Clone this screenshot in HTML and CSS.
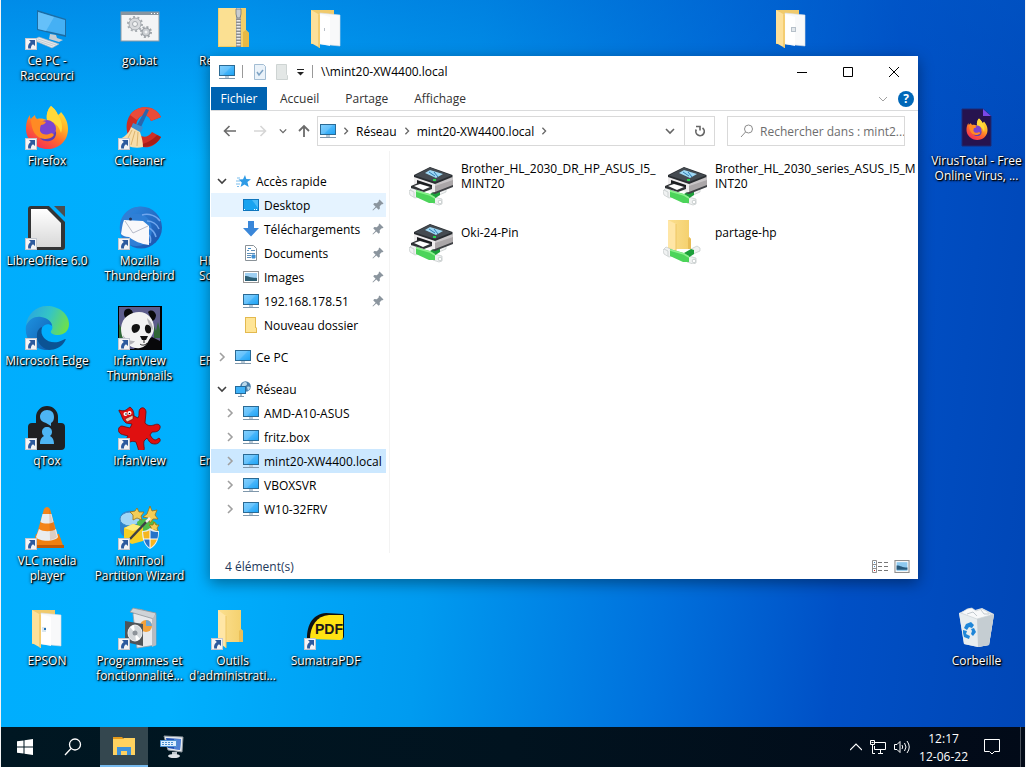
FILE: index.html
```html
<!DOCTYPE html>
<html lang="fr">
<head>
  <meta charset="UTF-8">
  <meta name="viewport" content="width=device-width, initial-scale=1.0">
  <title>Bureau</title>
  <link rel="stylesheet" href="styles.css">
</head>
<body>

  <!-- Shared icon shapes -->
  <svg class="sprites" width="0" height="0" aria-hidden="true">
    <defs>
      <linearGradient id="g-screen" x1="0" y1="0" x2="1" y2="1">
        <stop offset="0" stop-color="#6cc8ff"/><stop offset=".5" stop-color="#4ab7fb"/><stop offset="1" stop-color="#1fa4f5"/>
      </linearGradient>
      <linearGradient id="g-folder" x1="0" y1="0" x2="1" y2="0">
        <stop offset="0" stop-color="#fbdf90"/><stop offset="1" stop-color="#f4d06c"/>
      </linearGradient>
      <linearGradient id="g-fox" x1=".8" y1="0" x2=".2" y2="1">
        <stop offset="0" stop-color="#ffe83a"/><stop offset=".35" stop-color="#ffb025"/><stop offset=".6" stop-color="#ff6a2c"/><stop offset="1" stop-color="#f2265c"/>
      </linearGradient>
      <linearGradient id="g-edge1" x1="0" y1=".3" x2="1" y2=".6">
        <stop offset="0" stop-color="#2aa6e0"/><stop offset=".5" stop-color="#35c5c4"/><stop offset="1" stop-color="#6ee04b"/>
      </linearGradient>
      <linearGradient id="g-edge2" x1="0" y1="0" x2="1" y2="1">
        <stop offset="0" stop-color="#1e92e0"/><stop offset="1" stop-color="#0f5cae"/>
      </linearGradient>
      <linearGradient id="g-paper" x1="0" y1="0" x2="0" y2="1">
        <stop offset="0" stop-color="#ffffff"/><stop offset="1" stop-color="#d8d8d8"/>
      </linearGradient>
      <linearGradient id="g-tb" x1="0" y1="0" x2="1" y2="1">
        <stop offset="0" stop-color="#2f8fe6"/><stop offset="1" stop-color="#1b4fa8"/>
      </linearGradient>
    </defs>

    <symbol id="shortcut" viewBox="0 0 12 12">
      <rect width="12" height="12" fill="#f4f4f6"/>
      <rect x=".5" y=".5" width="11" height="11" fill="none" stroke="#c4c8d0"/>
      <path d="M4 2h6v6L8 6.200C6.500 7.200 5.800 8.500 6 10.500H3.200C2.600 7.500 3.600 5.500 5.800 4z" fill="#2d5a9e"/>
    </symbol>

    <symbol id="monitor" viewBox="0 0 16 16">
      <rect x="0" y="1" width="16" height="11" fill="#2b6a94"/>
      <rect x="1" y="2" width="14" height="9" fill="url(#g-screen)"/>
      <path d="M1 2h12L4 11H1z" fill="#fff" opacity=".15"/>
      <rect x="6" y="12" width="4" height="2" fill="#b9c9d6"/>
      <rect x="0" y="14" width="16" height="1" fill="#7f97ab"/>
    </symbol>

    <symbol id="right" viewBox="0 0 10 10">
      <path d="M3 1l4 4-4 4" fill="none" stroke="currentColor" stroke-width="1.600"/>
    </symbol>
    <symbol id="down" viewBox="0 0 10 10">
      <path d="M1 3l4 4 4-4" fill="none" stroke="currentColor" stroke-width="1.600"/>
    </symbol>

    <symbol id="pin" viewBox="0 0 12 12">
      <path d="M7.500.5l4 4-1 .8-.8-.1-2 2 .2 2.400-1.200 1.200L4.300 8.400 1 11.500l-.5-.5 3.100-3.300L1.200 5.300l1.200-1.200 2.400.2 2-2-.1-.8z" fill="#8b959e"/>
    </symbol>

    <symbol id="folder" viewBox="0 0 16 16">
      <path d="M2 0h11v10l1 1v5H2z" fill="#e3b94f"/>
      <path d="M3 1h9v10l1 0v4H3z" fill="#ffe596"/>
    </symbol>

    <symbol id="open-folder" viewBox="0 0 44 44">
      <path d="M7 4h23v34H7z" fill="#f0ca6c"/>
      <path d="M16 7l20 2v31l-20-2z" fill="#f8f9fa" stroke="#d9dde2" stroke-width=".6"/>
      <path d="M16 8l10 3v29l-10-2z" fill="#fff" opacity=".9"/>
      <path d="M7 4l9 5v33l-9-5z" fill="#fde09a"/>
      <path d="M14 8l2 1v33l-2-1z" fill="#f4cd72"/>
    </symbol>

    <symbol id="firefox" viewBox="0 0 44 44">
      <path d="M26 0c5 4 6 7 7 9 2-1 3-3 3-3 5 6 7 11 7 17 0 12-9 20-20.500 20S1 34 1 23c0-6 1-10 4-14 0 2 0 3 1 4 1-2 3-3 4-4 0 2 1 3 2 4 4-1 7 0 10 1-1-6 1-11 4-14z" fill="url(#g-fox)"/>
      <path d="M22 14c-1-6 1-11 4-14 5 4 6 7 7 9 4 6 5 12 3 18-2-7-6-11-14-13z" fill="#ffd93a"/>
      <circle cx="22" cy="23" r="9" fill="#7b43d1"/>
      <path d="M14 27c4 5 13 5 17-2 1 8-5 11-10 10-4 0-7-3-7-8z" fill="#5b3db8"/>
      <path d="M6 13c4-1 8 0 9 2 2 0 4 0 6 1-1 2-3 3-5 3-1 2-1 4-1 6 2 4 6 4 9 3 2-1 4-1 5 1-2 3-6 4-9 4C11 33 6 24 6 13z" fill="#ff8a24"/>
    </symbol>

    <symbol id="pipe" viewBox="0 0 44 20">
      <path d="M0 5l3-3 7 3v6l-4 1-5-3z" fill="#f0f2f2" stroke="#c3c8c8" stroke-width=".7"/>
      <path d="M1 4l4 2v5" fill="none" stroke="#cdd2d2"/>
      <path d="M25 11l8 2v5l-3 1-6-2z" fill="#f0f2f2" stroke="#c3c8c8" stroke-width=".7"/>
      <circle cx="31" cy="16" r="1.800" fill="#fff" stroke="#b8bebe" stroke-width=".7"/>
      <path d="M28 4l6-3 3 2v3l-7 3z" fill="#f0f2f2" stroke="#c3c8c8" stroke-width=".7"/>
      <path d="M21 8l7-4 3 1v4l-6 4z" fill="#1d9f3b"/>
      <path d="M7 4l14 4 5 3v6h-6L7 11z" fill="#4cd45a"/>
      <path d="M7 5l14 4 5 3" fill="none" stroke="#8cf08e" stroke-width="1.500"/>
    </symbol>

    <symbol id="printer" viewBox="0 0 44 44">
      <use href="#pipe" x="0" y="23" width="44" height="20"/>
      <path d="M5 13l21 7v10L5 23z" fill="#efedee"/>
      <path d="M26 20l18-6v9l-18 7z" fill="#aaa6a8"/>
      <path d="M26 20l18-6v3l-18 6z" fill="#c8c5c7"/>
      <path d="M26 29l18-7v2l-18 7-4-1z" fill="#3f4145"/>
      <path d="M5 12L21 4l22.500 8v2L26 21 5 14z" fill="#292d31"/>
      <path d="M6 12.500L21 4.500l21.500 8L26 19z" fill="#454b51"/>
      <path d="M16 10l5-3 13 4-7 4z" fill="#9fd8f4"/>
      <path d="M20 9l6 4M25 9l4 5" stroke="#2f7bb0"/>
      <path d="M24 16h3v2h-3z" fill="#28d34c"/>
      <path d="M8 17l15 5v4L8 21z" fill="#1b1d20"/>
      <path d="M2 23l7-3 14 4v2l-8 3-13-4z" fill="#303336"/>
      <path d="M5 23l6-2 10 3-7 3z" fill="#fff"/>
    </symbol>
  </svg>

  <main class="desktop">

    <a href="#" class="icon c1 r1">
      <svg viewBox="0 0 44 44">
        <path d="M12 4l29 9v18l-29-7z" fill="#1c6da5"/>
        <path d="M13 6l27 8v15l-27-6z" fill="#45b0f4"/>
        <path d="M13 6l16 5-8 14-8-2z" fill="#7ccbfb" opacity=".6"/>
        <path d="M25 28l6 1 1 3 6 2-4 2-10-3z" fill="#c6cdd4"/>
        <path d="M8 34l6-3 20 7-7 4z" fill="#e3e7ea" stroke="#a7b0b8" stroke-width=".6"/>
        <path d="M10 34l18 6M13 33l18 6" stroke="#b6bec5" stroke-width=".7"/>
        <use href="#shortcut" x="0" y="32" width="12" height="12"/>
      </svg>
      <span>Ce PC -<br>Raccourci</span>
    </a>

    <a href="#" class="icon c2 r1">
      <svg viewBox="0 0 44 44">
        <rect x="3" y="6" width="38" height="29" fill="#f3f4f5" stroke="#8e9aa3"/>
        <rect x="3" y="6" width="38" height="3" fill="#8795a0"/>
        <path d="M33 7.500h1M36 7.500h1M39 7.500h1" stroke="#fff"/>
        <circle cx="17" cy="18" r="6" fill="#d8dadd" stroke="#a6abb0"/>
        <circle cx="17" cy="18" r="7" fill="none" stroke="#a6abb0" stroke-width="2" stroke-dasharray="2 2.400"/>
        <circle cx="17" cy="18" r="2.500" fill="#f3f4f5" stroke="#a6abb0"/>
        <circle cx="28" cy="26" r="4" fill="#c9ccd0" stroke="#9ea3a8"/>
        <circle cx="28" cy="26" r="5" fill="none" stroke="#9ea3a8" stroke-width="2" stroke-dasharray="2 1.900"/>
        <circle cx="28" cy="26" r="1.500" fill="#f3f4f5"/>
      </svg>
      <span>go.bat</span>
    </a>

    <a href="#" class="icon partial c3 r1">
      <svg viewBox="0 0 44 44">
        <path d="M7 2h28v22l3 3v14H7z" fill="#f3cf69"/>
        <path d="M8 2h17v38H8z" fill="#fbe092"/>
        <path d="M32 26l3-2 3 3v14h-6z" fill="#e7b945"/>
        <path d="M25 2h5v39h-5z" fill="#8b8d8e"/>
        <path d="M27.500 2v39" stroke="#e9e9e9" stroke-width="4" stroke-dasharray="1.500 1.500"/>
        <path d="M25 3h5v5l-1 4h-3l-1-4z" fill="#c8ccd0" stroke="#72787d" stroke-width=".8"/>
      </svg>
      <span>Re</span>
    </a>

    <a href="#" class="icon c4 r1" aria-label="Dossier">
      <svg viewBox="0 0 44 44"><use href="#open-folder"/><path d="M20 22h1v3h-1z" fill="#b8bec6"/></svg>
    </a>

    <a href="#" class="icon c9 r1" aria-label="Dossier">
      <svg viewBox="0 0 44 44"><use href="#open-folder"/><rect x="22.500" y="21.500" width="4" height="4" fill="#e3e8ec" stroke="#b6c0c9"/></svg>
    </a>

    <a href="#" class="icon c1 r2">
      <svg viewBox="0 0 44 44"><use href="#firefox"/><use href="#shortcut" x="0" y="32" width="12" height="12"/></svg>
      <span>Firefox</span>
    </a>

    <a href="#" class="icon c2 r2">
      <svg viewBox="0 0 44 44">
        <path d="M43 11C37-1 20-2 12 9 6 18 8 32 17 38c9 6 20 4 26-7l-9-5c-3 5-9 6-12 3-5-4-5-12-1-17 4-4 10-3 12 3z" fill="#cf2d24"/>
        <path d="M43 11C37-1 20-2 12 9l7 5c4-6 12-6 14 1z" fill="#e84c3a"/>
        <path d="M19 39c9 4 19 1 24-8l-4-2c-4 5-11 9-20 10z" fill="#a81d18"/>
        <path d="M28 3l3 1-8 17-4-2z" fill="#2a66ad"/>
        <path d="M15 17l10 4-2 5-10-4z" fill="#3c8dd0"/>
        <path d="M13 21l9 5c2 6 3 10 3 15-8 2-18 0-24-8 6-2 10-6 12-12z" fill="#f8ddaa"/>
        <path d="M14 24L8 36M17 25l-4 14M20 26l-1 14" stroke="#dcb46d"/>
        <use href="#shortcut" x="0" y="32" width="12" height="12"/>
      </svg>
      <span>CCleaner</span>
    </a>

    <a href="#" class="icon c11 r2">
      <svg viewBox="0 0 44 44">
        <path d="M7 3h21l8 7v30H7z" fill="#26134f" stroke="#1a2a76"/>
        <path d="M28 3l8 7h-8z" fill="#7a48e8"/>
        <use href="#firefox" x="11" y="12" width="22" height="23"/>
      </svg>
      <span>VirusTotal - Free<br>Online Virus, ...</span>
    </a>

    <a href="#" class="icon c1 r3">
      <svg viewBox="0 0 44 44">
        <path d="M6 0h18l16 16v25q0 3-3 3H6q-3 0-3-3V3q0-3 3-3z" fill="#333435"/>
        <path d="M6 3h16l14 14v24H6z" fill="url(#g-paper)"/>
        <path d="M29 0h11v11z" fill="#4c4d4e"/>
        <use href="#shortcut" x="0" y="32" width="12" height="12"/>
      </svg>
      <span>LibreOffice 6.0</span>
    </a>

    <a href="#" class="icon c2 r3">
      <svg viewBox="0 0 44 44">
        <circle cx="23" cy="21.500" r="21" fill="url(#g-tb)"/>
        <path d="M3 14C7 4 16 0 24 1c-6 1-10 4-12 8 8-3 17 0 20 7 4 9 1 18-5 22-6 3-15 3-21-3C1 29 1 20 3 14z" fill="#2f7fd6"/>
        <path d="M24 9c7-2 15 1 18 6M29 15c5 0 10 3 12 8M31 22c4 2 6 5 7 9M31 29c2 2 2 5 1 8" fill="none" stroke="#6fa6ee" stroke-width="1.500"/>
        <path d="M6 14l19 1 6 5v19c-8-1-15-4-20-8-4 0-7-2-8-3 1-5 1-9 3-14z" fill="#f8f8fb"/>
        <path d="M7 15l8 12 15-7" fill="none" stroke="#b5b9c8"/>
        <circle cx="12.500" cy="13" r="1.500" fill="#23335b"/>
        <use href="#shortcut" x="0" y="32" width="12" height="12"/>
      </svg>
      <span>Mozilla<br>Thunderbird</span>
    </a>

    <a href="#" class="icon partial c3 r3"><svg viewBox="0 0 44 44"></svg><span>HP<br>Sc</span></a>

    <a href="#" class="icon c1 r4">
      <svg viewBox="0 0 44 44">
        <path d="M1 20C2 8 11 0 22 0c12 0 22 8 22 18 0 7-5 11-11 11-5 0-8-2-7-4 1-1 2-3 1-6-2-5-8-8-14-7C7 13 3 16 1 20z" fill="url(#g-edge1)"/>
        <path d="M1 20c3-7 9-10 15-9 7 1 11 5 11 9-3-3-8-2-10 2-4 9 2 17 11 20-3 2-6 2-8 2C9 43-1 34 1 20z" fill="url(#g-edge2)"/>
        <path d="M17 21c-3 10 6 17 16 15 3-1 5-2 7-3 1 0 1 0 0 2-3 6-10 9-16 9-8-2-13-9-12-15 0-4 2-7 5-8z" fill="#0b5394"/>
        <use href="#shortcut" x="0" y="32" width="12" height="12"/>
      </svg>
      <span>Microsoft Edge</span>
    </a>

    <a href="#" class="icon c2 r4">
      <svg viewBox="0 0 44 44">
        <rect width="44" height="44" fill="#000"/>
        <rect x="1" y="1" width="41" height="42" fill="#5d5d8c"/>
        <path d="M1 18l3 5 1-7 3 9v18H1zM36 20l2 5 2-9 2 8v8h-6z" fill="#2f6636"/>
        <path d="M20 40l14-9 8 4v9H14z" fill="#08080a"/>
        <path d="M7 4c4-3 8 0 8 4l-6 6c-3-3-4-7-2-10zM30 6c3-3 7-1 8 3 0 3-2 6-4 6z" fill="#0a0a0c"/>
        <path d="M3 22C4 11 13 6 21 6c9 0 15 7 15 16 0 5-3 9-5 12-2 4-4 7-9 8-6 1-11-2-14-6-4-4-5-9-5-14z" fill="#f2f2f2"/>
        <path d="M5 29c3 5 8 6 12 6-2 3-5 4-7 3s-5-5-5-9zM29 12c4 3 6 7 6 12-2-2-5-6-6-12z" fill="#b3b3b8"/>
        <path d="M15 19c3-2 7-1 7 2s-3 6-6 6c-3-2-3-6-1-8zM28 19c3-1 6 2 5 6 0 2-2 3-4 2s-3-6-1-8z" fill="#111"/>
        <path d="M22 30h8l-2 4h-4z" fill="#111"/>
        <path d="M26 34v3m-4 1c2 2 6 1 7-1" fill="none" stroke="#222"/>
        <use href="#shortcut" x="0" y="32" width="12" height="12"/>
      </svg>
      <span>IrfanView<br>Thumbnails</span>
    </a>

    <a href="#" class="icon partial c3 r4"><svg viewBox="0 0 44 44"></svg><span>EP</span></a>

    <a href="#" class="icon c1 r5">
      <svg viewBox="0 0 44 44">
        <path d="M11 17v-6a11 11 0 0 1 22 0v6h3q4 0 4 4v19q0 4-4 4H7q-4 0-4-4V21q0-4 4-4z" fill="#1f2023"/>
        <path d="M22 4c5 0 7 3 7 7 0 3-1 5-3 6v3l-5-3c-4-1-6-3-6-6 0-4 3-7 7-7z" fill="#4db5f5"/>
        <path d="M22 21c3 0 5 2 5 5 0 2-1 3-2 4 2 1 4 3 4 8H15c0-5 2-7 4-8-1-1-2-2-2-4 0-3 2-5 5-5z" fill="#4db5f5"/>
        <use href="#shortcut" x="0" y="32" width="12" height="12"/>
      </svg>
      <span>qTox</span>
    </a>

    <a href="#" class="icon c2 r5">
      <svg viewBox="0 0 44 44">
        <path d="M1 4c3 1 5 1 7 0l4-3c3 2 4 5 4 9l4 2c2-3 0-7 2-9 3-3 6 0 6 3l-1 11c3 3 5 3 9 2 4-2 7 0 6 3-1 4-5 4-8 4l-2 3c2 3 3 5 6 5l3-2c3 2 0 6-4 6-5 0-6-3-8-6l-3 3c-1 4 1 7 0 9-2 3-6 1-6-2l-2-6c-3-1-5-1-7 1-3 3-4 5-6 3-2-3 3-6 5-10-3-1-5-1-7-2-4-2-3-8 1-8l8 2 2-4-6-1c-4-3-4-8-7-12z" fill="#e01010" stroke="#6e0808" stroke-width=".8"/>
        <circle cx="7.500" cy="8" r="2" fill="#fff"/><circle cx="11.500" cy="7" r="2" fill="#fff"/>
        <circle cx="8" cy="8" r=".8"/><circle cx="11.500" cy="7.500" r=".8"/>
        <path d="M7 13l8-4 0 4-6 3z" fill="#f4c9b0" stroke="#6e0808" stroke-width=".6"/>
        <use href="#shortcut" x="0" y="32" width="12" height="12"/>
      </svg>
      <span>IrfanView</span>
    </a>

    <a href="#" class="icon partial c3 r5"><svg viewBox="0 0 44 44"></svg><span>En</span></a>

    <a href="#" class="icon c1 r6">
      <svg viewBox="0 0 44 44">
        <path d="M11 28h23l5 14H7z" fill="#f08010"/>
        <path d="M7 39h32v3H7z" fill="#c35a06"/>
        <path d="M19 3q3-4 6 0l8 28c-3 5-19 5-22 0z" fill="#f4851a"/>
        <path d="M17.500 8h9l2 8c-3 2-10 2-13 0zM14 23c4 3 13 3 17 0l2 8c-3 5-19 5-22 0z" fill="#e9ecef"/>
        <path d="M24 2l8 29c-2 2-5 3-7 3z" fill="#a04400" opacity=".18"/>
        <use href="#shortcut" x="0" y="32" width="12" height="12"/>
      </svg>
      <span>VLC media<br>player</span>
    </a>

    <a href="#" class="icon c2 r6">
      <svg viewBox="0 0 44 44">
        <path d="M2 12C3 5 12 3 20 6l2 8v12L8 32c-5-3-6-6-6-9z" fill="#2c84cf"/>
        <ellipse cx="12" cy="13" rx="10" ry="7" fill="#a3d6f6" stroke="#3c8cc8"/>
        <path d="M19 16c6-5 16-4 20 2v8l-17 4z" fill="#4fbc4a"/>
        <path d="M6 22l9-4 10 3v14l-11 3-8-4z" fill="#f6cf24"/>
        <path d="M6 22l9-4 10 3-10 4z" fill="#ffec7a"/>
        <path d="M19 2l2 4 5 0-3 4 1 4-5-2-4 2 0-5-3-3 5-1zM32 0l2 5 5-1-2 5 3 4-5 0-3 4-2-5-5-1 4-3zM36 16l2 3 3 0-2 3 1 3-4-1-3 1v-4l-2-2h4z" fill="#f3cd57" stroke="#9a7114" stroke-width=".8"/>
        <path d="M12 33L31 13" stroke="#3d4045" stroke-width="2.500"/><path d="M28 16l4-4" stroke="#eee" stroke-width="2.500"/>
        <path d="M24 25c3 0 6-1 8-3 3 2 6 3 9 3 0 8-2 14-9 18-6-4-8-10-8-18z" fill="#e8edf1"/>
        <path d="M32 24c3 2 5 2 8 2 0 3 0 5-1 7h-7zM26 33h6v9c-3-2-5-5-6-9z" fill="#2672c8"/>
        <path d="M25 26c3 0 5-1 7-2v9h-6zM32 33h7c-1 4-4 7-7 9z" fill="#f5b51e"/>
        <path d="M32 24v18M25 33h14" stroke="#fff"/>
        <use href="#shortcut" x="0" y="32" width="12" height="12"/>
      </svg>
      <span>MiniTool<br>Partition Wizard</span>
    </a>

    <a href="#" class="icon c1 r7">
      <svg viewBox="0 0 44 44"><use href="#open-folder"/><path d="M17 21h4v5h-4z" fill="#d8e6ef"/><path d="M19 22h2v2h-2z" fill="#2672b8"/></svg>
      <span>EPSON</span>
    </a>

    <a href="#" class="icon c2 r7">
      <svg viewBox="0 0 44 44">
        <path d="M15 8l6-5 17 5v31l-19 3z" fill="#e7e9ec" stroke="#9ba0a6" stroke-width=".8"/>
        <path d="M12 6l3-4 23 5-2 6z" fill="#cfd3d7" stroke="#8f959b" stroke-width=".8"/>
        <path d="M34 13l4-5v31l-4 2z" fill="#b6bbc1"/>
        <circle cx="28" cy="20" r="6" fill="#f2a13b"/><path d="M28 20v-6a6 6 0 0 1 6 6z" fill="#6aa7d8"/>
        <path d="M7 15l18 3v22L7 36z" fill="#4f5459"/>
        <ellipse cx="17" cy="27" rx="7" ry="8" fill="#d3d7da" stroke="#f2f3f4"/>
        <path d="M17 27l-5-6 4-2zM17 27l5 6-4 2z" fill="#fff"/>
        <circle cx="17" cy="27" r="2.500" fill="#8d9399"/>
        <use href="#shortcut" x="0" y="32" width="12" height="12"/>
      </svg>
      <span>Programmes et<br>fonctionnalité...</span>
    </a>

    <a href="#" class="icon c3 r7">
      <svg viewBox="0 0 44 44">
        <path d="M7 4h23v19l2 2v11H7z" fill="url(#g-folder)"/>
        <path d="M7 4l8 6v32l-8-6z" fill="#ffe6a6"/><path d="M15 10v32" stroke="#edc665"/>
        <path d="M30 23l2 2v11h-4V25z" fill="#eabf58"/>
        <use href="#shortcut" x="0" y="32" width="12" height="12"/>
      </svg>
      <span>Outils<br>d'administrati...</span>
    </a>

    <a href="#" class="icon c4 r7">
      <svg viewBox="0 0 44 44">
        <path d="M3 33C3 18 9 8 22 7l17 1q1 0 1 2v20q0 3-3 3z" fill="#111"/>
        <path d="M6 33C6 20 13 10 25 9l14 0v22q0 3-3 3z" fill="#ffe312"/>
        <text x="11" y="28" class="pdf-mark">PDF</text>
        <use href="#shortcut" x="0" y="32" width="12" height="12"/>
      </svg>
      <span>SumatraPDF</span>
    </a>

    <a href="#" class="icon c11 r7">
      <svg viewBox="0 0 44 44">
        <path d="M4 7l11-5 5 2 7-2 12 6-5 31-11 2-14-3z" fill="#dfe4e7"/>
        <path d="M4 7l18 5 17-4-5 31-11 2-14-3z" fill="#e9edef" opacity=".9"/>
        <path d="M22 12l17-4-5 31-11 2z" fill="#c5cdd2"/>
        <path d="M6 7l6-4 5-1 4 3 6-2 4 2 5 4-14 4z" fill="#f8f9fa" stroke="#ccd2d6" stroke-width=".7"/>
        <path d="M12 8l6-2 4 4M26 4l3 4 5 0" fill="none" stroke="#c3cacf"/>
        <path d="M11 18l5-2 3 3-2 3-3-1-2 3-3-2zM19 22l2 4-3 4-2-2 1-3-1-2zM8 24l4 1-1 3 4 2-1 3-5-2-1-4z" fill="#1f86d8"/>
      </svg>
      <span>Corbeille</span>
    </a>

    <section class="window">
      <header class="titlebar">
        <svg class="i16" viewBox="0 0 16 16"><use href="#monitor"/></svg>
        <i class="sep"></i>
        <button class="quick" aria-label="Propriétés">
          <svg viewBox="0 0 16 16"><path d="M2.500.5h9l2 2v13h-11z" fill="#eaf2f9" stroke="#a3bdd3"/><path d="M5 8l2 3 4-5" fill="none" stroke="#7ea3c4" stroke-width="1.500"/></svg>
        </button>
        <button class="quick" aria-label="Nouveau dossier">
          <svg viewBox="0 0 16 16"><path d="M2.500.5h10v10l1 1v4h-11z" fill="#e3e7e6" stroke="#ced4d3"/></svg>
        </button>
        <button class="more" aria-label="Personnaliser">
          <svg viewBox="0 0 8 8"><path d="M0 1.500h7" stroke="#222"/><path d="M0 4h7l-3.500 3.500z" fill="#222"/></svg>
        </button>
        <i class="sep"></i>
        <h1>\\mint20-XW4400.local</h1>
        <div class="controls">
          <button aria-label="Réduire"><svg viewBox="0 0 10 10"><path d="M0 5.500h10" stroke="#000"/></svg></button>
          <button aria-label="Agrandir"><svg viewBox="0 0 10 10"><path d="M.5.5h9v9h-9z" fill="none" stroke="#000"/></svg></button>
          <button aria-label="Fermer"><svg viewBox="0 0 10 10"><path d="M0 0l10 10M10 0L0 10" stroke="#000"/></svg></button>
        </div>
      </header>

      <nav class="tabs">
        <a href="#" class="active">Fichier</a>
        <a href="#">Accueil</a>
        <a href="#">Partage</a>
        <a href="#">Affichage</a>
        <button class="expand" aria-label="Développer le ruban"><svg viewBox="0 0 10 10"><path d="M1 3l4 4 4-4" fill="none" stroke="#a0a0a0"/></svg></button>
        <button class="help" aria-label="Aide">?</button>
      </nav>

      <div class="toolbar">
        <button class="nav-button" aria-label="Précédent"><svg viewBox="0 0 14 14"><path d="M13 7H2M6.500 2L1.500 7l5 5" fill="none" stroke="#6b6b6b" stroke-width="1.600"/></svg></button>
        <button class="nav-button" aria-label="Suivant"><svg viewBox="0 0 14 14"><path d="M1 7h11M7.500 2l5 5-5 5" fill="none" stroke="#d6d6d6" stroke-width="1.600"/></svg></button>
        <button class="history" aria-label="Emplacements récents"><svg viewBox="0 0 10 10"><use href="#down"/></svg></button>
        <button class="up" aria-label="Dossier parent"><svg viewBox="0 0 14 14"><path d="M7 13V2M2 7l5-5 5 5" fill="none" stroke="#6b6b6b" stroke-width="1.800"/></svg></button>

        <div class="address">
          <svg class="i16" viewBox="0 0 16 16"><use href="#monitor"/></svg>
          <svg class="crumb-arrow" viewBox="0 0 10 10"><use href="#right"/></svg>
          <a href="#">Réseau</a>
          <svg class="crumb-arrow" viewBox="0 0 10 10"><use href="#right"/></svg>
          <a href="#">mint20-XW4400.local</a>
          <svg class="crumb-arrow" viewBox="0 0 10 10"><use href="#right"/></svg>
          <button class="drop" aria-label="Historique"><svg viewBox="0 0 10 10"><use href="#down"/></svg></button>
          <button class="refresh" aria-label="Actualiser"><svg viewBox="0 0 12 12"><path d="M8.500 3a4.200 4.200 0 1 1-6.200 1.500" fill="none" stroke="#666" stroke-width="1.700"/><path d="M2 1.500h4v4" fill="none" stroke="#666" stroke-width="1.600"/></svg></button>
        </div>

        <label class="search">
          <svg viewBox="0 0 14 14"><circle cx="8.500" cy="5" r="4" fill="none" stroke="#8c8c8c"/><path d="M5.500 8L1 13" stroke="#8c8c8c"/></svg>
          <input type="text" aria-label="Rechercher" placeholder="Rechercher dans : mint2...">
        </label>
      </div>

      <div class="panes">
        <nav class="tree">
          <ul>
            <li><a href="#">
              <svg class="arrow open" viewBox="0 0 10 10"><use href="#down"/></svg>
              <svg class="i16" viewBox="0 0 16 16"><path d="M10 2l1.300 4 4.700.3-3.600 2.800 1.300 5L9.500 11.500 5.500 14l1.300-4.500L3.500 6.500l4.500-.3z" fill="#2f9be6"/><path d="M2 5h3M1 8h4M1 11h4M2 13.500h2" stroke="#7bbdec"/></svg>
              Accès rapide</a></li>
            <li><a href="#" class="child hover">
              <svg class="i16" viewBox="0 0 16 16"><rect x="0" y="2" width="16" height="12" fill="#0f76bd"/><rect x="1" y="3" width="14" height="10" fill="#18a3f0"/><path d="M9 3h6v8z" fill="#4bbcf8"/><path d="M1 12.500h1M11 12.500h1M13 12.500h1" stroke="#fff"/></svg>
              Desktop<svg class="pin" viewBox="0 0 12 12"><use href="#pin"/></svg></a></li>
            <li><a href="#" class="child">
              <svg class="i16" viewBox="0 0 16 16"><path d="M5 0h6v7h5l-8 8.500L0 7h5z" fill="#3a87d9"/></svg>
              Téléchargements<svg class="pin" viewBox="0 0 12 12"><use href="#pin"/></svg></a></li>
            <li><a href="#" class="child">
              <svg class="i16" viewBox="0 0 16 16"><path d="M2.500.5h8l3 3v12h-11z" fill="#fff" stroke="#8a9298"/><path d="M4 5.500h2M4 8.500h8M4 10.500h4M4 12.500h4M8 5.500h4" stroke="#5f8fb8"/><path d="M5 3.500h3M9 10h3v3H9z" fill="#3f8fd2" stroke="#3f8fd2"/></svg>
              Documents<svg class="pin" viewBox="0 0 12 12"><use href="#pin"/></svg></a></li>
            <li><a href="#" class="child">
              <svg class="i16" viewBox="0 0 16 16"><rect x=".5" y="2.500" width="15" height="11" fill="#fff" stroke="#979797"/><rect x="2" y="4" width="12" height="8" fill="#9fd0f2"/><path d="M2 7c4 0 5 2 12 2v3H2z" fill="#2d5f74"/></svg>
              Images<svg class="pin" viewBox="0 0 12 12"><use href="#pin"/></svg></a></li>
            <li><a href="#" class="child">
              <svg class="i16" viewBox="0 0 16 16"><use href="#monitor"/></svg>
              192.168.178.51<svg class="pin" viewBox="0 0 12 12"><use href="#pin"/></svg></a></li>
            <li><a href="#" class="child">
              <svg class="i16" viewBox="0 0 16 16"><use href="#folder"/></svg>
              Nouveau dossier</a></li>
          </ul>
          <ul>
            <li><a href="#">
              <svg class="arrow" viewBox="0 0 10 10"><use href="#right"/></svg>
              <svg class="i16" viewBox="0 0 16 16"><use href="#monitor"/></svg>
              Ce PC</a></li>
          </ul>
          <ul>
            <li><a href="#">
              <svg class="arrow open" viewBox="0 0 10 10"><use href="#down"/></svg>
              <svg class="i16" viewBox="0 0 16 16"><circle cx="10.500" cy="5.500" r="5.300" fill="#4a7ea8"/><path d="M8 2c2-2 4-1 4 1S9 5 8 7s-2-3 0-5zM12 6c2-1 3 0 3 1l-2 3z" fill="#bcd9ea"/><rect x="0" y="5" width="11" height="8" fill="#256a9a"/><rect x="1" y="6" width="9" height="6" fill="#3fb2f8"/><path d="M3 15.500h6" stroke="#7f97ab"/><path d="M5 13h2v2H5z" fill="#a9bac7"/></svg>
              Réseau</a></li>
            <li><a href="#" class="child">
              <svg class="arrow" viewBox="0 0 10 10"><use href="#right"/></svg>
              <svg class="i16" viewBox="0 0 16 16"><use href="#monitor"/></svg>
              AMD-A10-ASUS</a></li>
            <li><a href="#" class="child">
              <svg class="arrow" viewBox="0 0 10 10"><use href="#right"/></svg>
              <svg class="i16" viewBox="0 0 16 16"><use href="#monitor"/></svg>
              fritz.box</a></li>
            <li><a href="#" class="child selected">
              <svg class="arrow" viewBox="0 0 10 10"><use href="#right"/></svg>
              <svg class="i16" viewBox="0 0 16 16"><use href="#monitor"/></svg>
              mint20-XW4400.local</a></li>
            <li><a href="#" class="child">
              <svg class="arrow" viewBox="0 0 10 10"><use href="#right"/></svg>
              <svg class="i16" viewBox="0 0 16 16"><use href="#monitor"/></svg>
              VBOXSVR</a></li>
            <li><a href="#" class="child">
              <svg class="arrow" viewBox="0 0 10 10"><use href="#right"/></svg>
              <svg class="i16" viewBox="0 0 16 16"><use href="#monitor"/></svg>
              W10-32FRV</a></li>
          </ul>
        </nav>

        <div class="files">
          <a href="#" class="tile"><svg viewBox="0 0 44 44"><use href="#printer"/></svg><span>Brother_HL_2030_DR_HP_ASUS_I5_<br>MINT20</span></a>
          <a href="#" class="tile"><svg viewBox="0 0 44 44"><use href="#printer"/></svg><span>Brother_HL_2030_series_ASUS_I5_M<br>INT20</span></a>
          <a href="#" class="tile"><svg viewBox="0 0 44 44"><use href="#printer"/></svg><span>Oki-24-Pin</span></a>
          <a href="#" class="tile">
            <svg viewBox="0 0 44 44">
              <path d="M5 0h21v17l2 2v10H5z" fill="url(#g-folder)"/>
              <path d="M5 0l8 4v27l-8-4z" fill="#ffe6a6"/><path d="M13 4v27" stroke="#edc665"/>
              <path d="M26 17l2 2v10h-3v-10z" fill="#e8bd57"/>
              <use href="#pipe" x="0" y="25" width="44" height="20"/>
            </svg>
            <span>partage-hp</span>
          </a>
        </div>
      </div>

      <footer class="status">
        <span>4 élément(s)</span>
        <button aria-label="Détails"><svg viewBox="0 0 16 13"><path d="M.5.500h4v12h-4zM.500 4.500h4M.500 8.500h4" fill="none" stroke="#8f8f8f"/><path d="M2 2h1v1H2z" fill="#4a90c8"/><path d="M2 6h1v1H2z" fill="#4a90c8"/><path d="M2 10h1v1H2z" fill="#d02020"/><path d="M6 2.500h4M12 2.500h4M6 6.500h4M12 6.500h4M6 10.500h4M12 10.500h4" stroke="#777"/></svg></button>
        <button aria-label="Grandes icônes"><svg viewBox="0 0 14 12"><rect x=".5" y=".5" width="13" height="11" fill="#fff" stroke="#8f8f8f"/><rect x="2" y="2" width="10" height="8" fill="#8ec9ef"/><path d="M2 5c4 0 5 2 10 2v2H2z" fill="#27587a"/></svg></button>
      </footer>
    </section>
  </main>

  <footer class="taskbar">
    <button aria-label="Démarrer"><svg width="16" height="16" viewBox="0 0 16 16"><path d="M0 2.300L6.500 1.400v6.100H0zM7.500 1.200L16 0v7.500H7.500zM0 8.500h6.500v6.100L0 13.700zM7.500 8.500H16V16l-8.500-1.200z" fill="#fff"/></svg></button>
    <button aria-label="Rechercher"><svg width="18" height="18" viewBox="0 0 18 18"><circle cx="11" cy="6.500" r="5.500" fill="none" stroke="#fff" stroke-width="1.300"/><path d="M7 10.500L1 17" stroke="#fff" stroke-width="1.300"/></svg></button>
    <button class="running" aria-label="Explorateur de fichiers">
      <svg width="22" height="20" viewBox="0 0 22 20"><path d="M0 1h9l2 2h-1l-1 2H0z" fill="#e59a1b"/><path d="M0 3h10l1-1h11v17H0z" fill="#ffd25f"/><path d="M4 11h14v8h-4v-4H8v4H4z" fill="#3d92dc"/></svg>
    </button>
    <button aria-label="Bureau à distance">
      <svg width="24" height="24" viewBox="0 0 24 24"><path d="M4 1l19 1-1 15-14-2z" fill="#e7ebef" stroke="#8e979f"/><path d="M6 3l15 1-1 11-12-2z" fill="#1f4fb4"/><path d="M14 4l7 0-1 11-6-1z" fill="#6fa4ea" opacity=".6"/><path d="M.5 5.500h16v6H.5z" fill="#dcefff" stroke="#4a90d0"/><path d="M2 7.500h12M2 9.500h12" stroke="#4a90d0" stroke-dasharray="2 1"/><path d="M12 17h5v3h-5z" fill="#c1c8ce"/><ellipse cx="14" cy="21" rx="6" ry="2" fill="#dfe3e7"/></svg>
    </button>

    <div class="tray">
      <button aria-label="Icônes cachées"><svg width="12" height="8" viewBox="0 0 12 8"><path d="M0 7l6-6 6 6" fill="none" stroke="#fff" stroke-width="1.200"/></svg></button>
      <button aria-label="Réseau"><svg width="16" height="14" viewBox="0 0 16 14"><path d="M5 2.500h10.500v7H4.500V6M8 13.500h5M10.500 10v3" fill="none" stroke="#fff"/><path d="M.5.500h4v4h-4zM2.500 5v8.500H5" fill="none" stroke="#fff"/><path d="M1.500 2.500h2" stroke="#fff"/></svg></button>
      <button aria-label="Volume"><svg width="17" height="14" viewBox="0 0 17 14"><path d="M.5 4.500H3l3-3v11l-3-3H.500z" fill="none" stroke="#fff"/><path d="M8 5q1.500 2 0 4M10.500 3q3 4 0 8M13 1q4.500 6 0 12" fill="none" stroke="#fff"/></svg></button>
      <time class="clock"><span>12:17</span><span>12-06-22</span></time>
      <button class="notices" aria-label="Notifications"><svg width="16" height="16" viewBox="0 0 16 16"><path d="M.5.500h15v12h-5L8 15l-2.500-2.500h-5z" fill="none" stroke="#fff"/></svg></button>
    </div>
  </footer>

</body>
</html>
```
FILE: styles.css
```css
* {
  box-sizing: border-box;
}

body {
  margin: 0;
  padding: 0 1px;
  height: 100vh;
  display: flex;
  flex-direction: column;
  background: #f4f4f4;
  font-family: "Open Sans", "Noto Sans", sans-serif;
  font-size: 12px;
  line-height: 15px;
  color: #000;
}

a {
  color: inherit;
  text-decoration: none;
}

button {
  display: flex;
  align-items: center;
  justify-content: center;
  padding: 0;
  border: none;
  background: none;
  color: inherit;
  font-family: inherit;
}

svg {
  display: block;
  flex: none;
}

.sprites {
  position: absolute;
}

.i16 {
  width: 16px;
  height: 16px;
}

/* Desktop */
.desktop {
  position: relative;
  flex: 1;
  min-height: 0;
  display: grid;
  grid-template-columns: 92px repeat(10, 93px);
  grid-template-rows: repeat(7, 100px);
  overflow: hidden;
  background:
    linear-gradient(180deg, rgba(0, 90, 200, 0.4), rgba(0, 90, 200, 0) 22%),
    linear-gradient(96deg, #00adfd 0%, #00b0fe 22%, #009bf0 44%, #0070dc 66%, #0050c6 82%, #0046b6 100%);
}

.icon {
  display: flex;
  flex-direction: column;
  align-items: center;
  gap: 3px;
  padding-top: 6px;
  color: #fff;
  text-align: center;
  white-space: nowrap;
  text-shadow: 1px 1px 2px #000, 1px 1px 1px #000, 0 0 3px rgba(0, 0, 0, 0.7);
}

.icon svg {
  width: 44px;
  height: 44px;
}

.partial span {
  align-self: flex-start;
  padding-left: 13px;
  text-align: left;
}

.c1 { grid-column: 1; }
.c2 { grid-column: 2; }
.c3 { grid-column: 3; }
.c4 { grid-column: 4; }
.c9 { grid-column: 9; }
.c11 { grid-column: 11; }
.r1 { grid-row: 1; }
.r2 { grid-row: 2; }
.r3 { grid-row: 3; }
.r4 { grid-row: 4; }
.r5 { grid-row: 5; }
.r6 { grid-row: 6; }
.r7 { grid-row: 7; }

.pdf-mark {
  font: bold 14px "Liberation Sans", sans-serif;
  fill: #1a1a1a;
  text-shadow: none;
}

/* Explorer window */
.window {
  position: absolute;
  top: 56px;
  right: 107px;
  bottom: 148px;
  left: 209px;
  display: flex;
  flex-direction: column;
  background: #fff;
  border-left: 1px solid #fff;
  box-shadow: 0 4px 14px rgba(0, 0, 0, 0.4);
}

.titlebar {
  display: flex;
  align-items: center;
  height: 31px;
  padding-left: 8px;
}

.titlebar h1 {
  margin: 0 0 0 8px;
  font-size: 12px;
  font-weight: normal;
}

.sep {
  width: 1px;
  height: 13px;
  margin-left: 7px;
  background: #999;
}

.quick {
  margin-left: 9px;
}

.quick + .quick {
  margin-left: 6px;
}

.quick svg {
  width: 16px;
  height: 16px;
}

.more {
  margin-left: 7px;
}

.more svg {
  width: 8px;
  height: 8px;
}

.controls {
  display: flex;
  align-self: stretch;
  margin-left: auto;
  padding-right: 1px;
}

.controls button {
  width: 46px;
}

.controls svg {
  width: 10px;
  height: 10px;
}

.tabs {
  display: flex;
  align-items: stretch;
  height: 24px;
  padding-right: 4px;
  border-bottom: 1px solid #dadbdc;
  color: #333;
}

.tabs a {
  padding: 4px 13px;
}

.tabs a.active {
  width: 56px;
  padding: 4px 0;
  text-align: center;
  background: #0063b1;
  color: #fff;
}

.expand {
  width: 14px;
  margin-left: auto;
}

.expand svg {
  width: 10px;
  height: 10px;
}

.help {
  align-self: center;
  width: 16px;
  height: 16px;
  margin-left: 8px;
  border-radius: 50%;
  background: #0067b8;
  color: #fff;
  font-size: 12px;
  font-weight: bold;
}

.toolbar {
  display: flex;
  align-items: center;
  height: 40px;
  padding: 0 13px 0 12px;
  color: #666;
}

.nav-button {
  width: 14px;
  margin-right: 16px;
}

.nav-button + .nav-button {
  margin-right: 12px;
}

.history {
  margin-right: 10px;
}

.history svg {
  width: 8px;
  height: 8px;
}

.up {
  width: 14px;
  margin-right: 6px;
}

.address {
  flex: 1;
  display: flex;
  align-items: center;
  height: 30px;
  padding-left: 2px;
  border: 1px solid #d9d9d9;
}

.address a {
  color: #000;
}

.crumb-arrow {
  width: 8px;
  height: 8px;
  margin: 0 6px;
}

.drop {
  width: 28px;
  margin-left: auto;
}

.drop svg {
  width: 10px;
  height: 10px;
}

.refresh {
  width: 30px;
  height: 28px;
  border-left: 1px solid #d9d9d9;
}

.refresh svg {
  width: 12px;
  height: 12px;
}

.search {
  display: flex;
  align-items: center;
  width: 178px;
  height: 30px;
  margin-left: 12px;
  padding-left: 12px;
  border: 1px solid #d9d9d9;
}

.search svg {
  width: 14px;
  height: 14px;
}

.search input {
  flex: 1;
  min-width: 0;
  padding: 0 0 0 6px;
  border: none;
  outline: none;
  background: none;
  font: inherit;
}

.search input::placeholder {
  color: #6d6d6d;
}

.panes {
  flex: 1;
  min-height: 0;
  display: flex;
}

.tree {
  width: 179px;
  padding-top: 18px;
  padding-right: 3px;
  border-right: 1px solid #f3f3f3;
}

.tree ul {
  margin: 0 0 8px;
  padding: 0;
  list-style: none;
}

.tree a {
  display: flex;
  align-items: center;
  gap: 5px;
  height: 24px;
  padding-left: 6px;
  white-space: nowrap;
}

.tree a.child {
  padding-left: 32px;
}

.tree .arrow {
  width: 10px;
  height: 10px;
  margin-right: 3px;
  color: #a0a0a0;
}

.tree .arrow.open {
  color: #404040;
}

.tree .child .arrow {
  margin-left: -18px;
}

.tree .hover {
  background: #e5f3ff;
}

.tree .selected {
  background: #cce8ff;
}

.pin {
  width: 12px;
  height: 12px;
  margin-left: auto;
  margin-right: 2px;
}

.files {
  flex: 1;
  display: grid;
  grid-template-columns: repeat(auto-fill, 254px);
  grid-auto-rows: 57px;
  align-content: start;
  padding: 5px 0 0 19px;
}

.tile {
  display: flex;
  align-items: center;
  gap: 8px;
}

.tile svg {
  width: 44px;
  height: 44px;
}

.tile span {
  padding-bottom: 18px;
  white-space: nowrap;
}

.status {
  display: flex;
  align-items: center;
  height: 26px;
  padding: 0 8px 0 14px;
  color: #1e395b;
}

.status span {
  margin-right: auto;
}

.status button {
  margin-left: 6px;
}

.status svg {
  width: 16px;
  height: 13px;
}

/* Taskbar */
.taskbar {
  display: flex;
  height: 40px;
  background: linear-gradient(90deg, #001722, #01131f 50%, #020a18);
  color: #fff;
}

.taskbar > button {
  width: 48px;
}

.taskbar > .running {
  margin-left: 3px;
  background: #34474f;
  border-bottom: 2px solid #76b9ed;
}

.tray {
  display: flex;
  align-items: center;
  gap: 8px;
  margin-left: auto;
}

.clock {
  display: flex;
  flex-direction: column;
  align-items: center;
  gap: 3px;
}

.notices {
  align-self: stretch;
  padding: 0 20px 0 8px;
  margin-right: 4px;
  border-right: 1px solid #4b525c;
}
```
